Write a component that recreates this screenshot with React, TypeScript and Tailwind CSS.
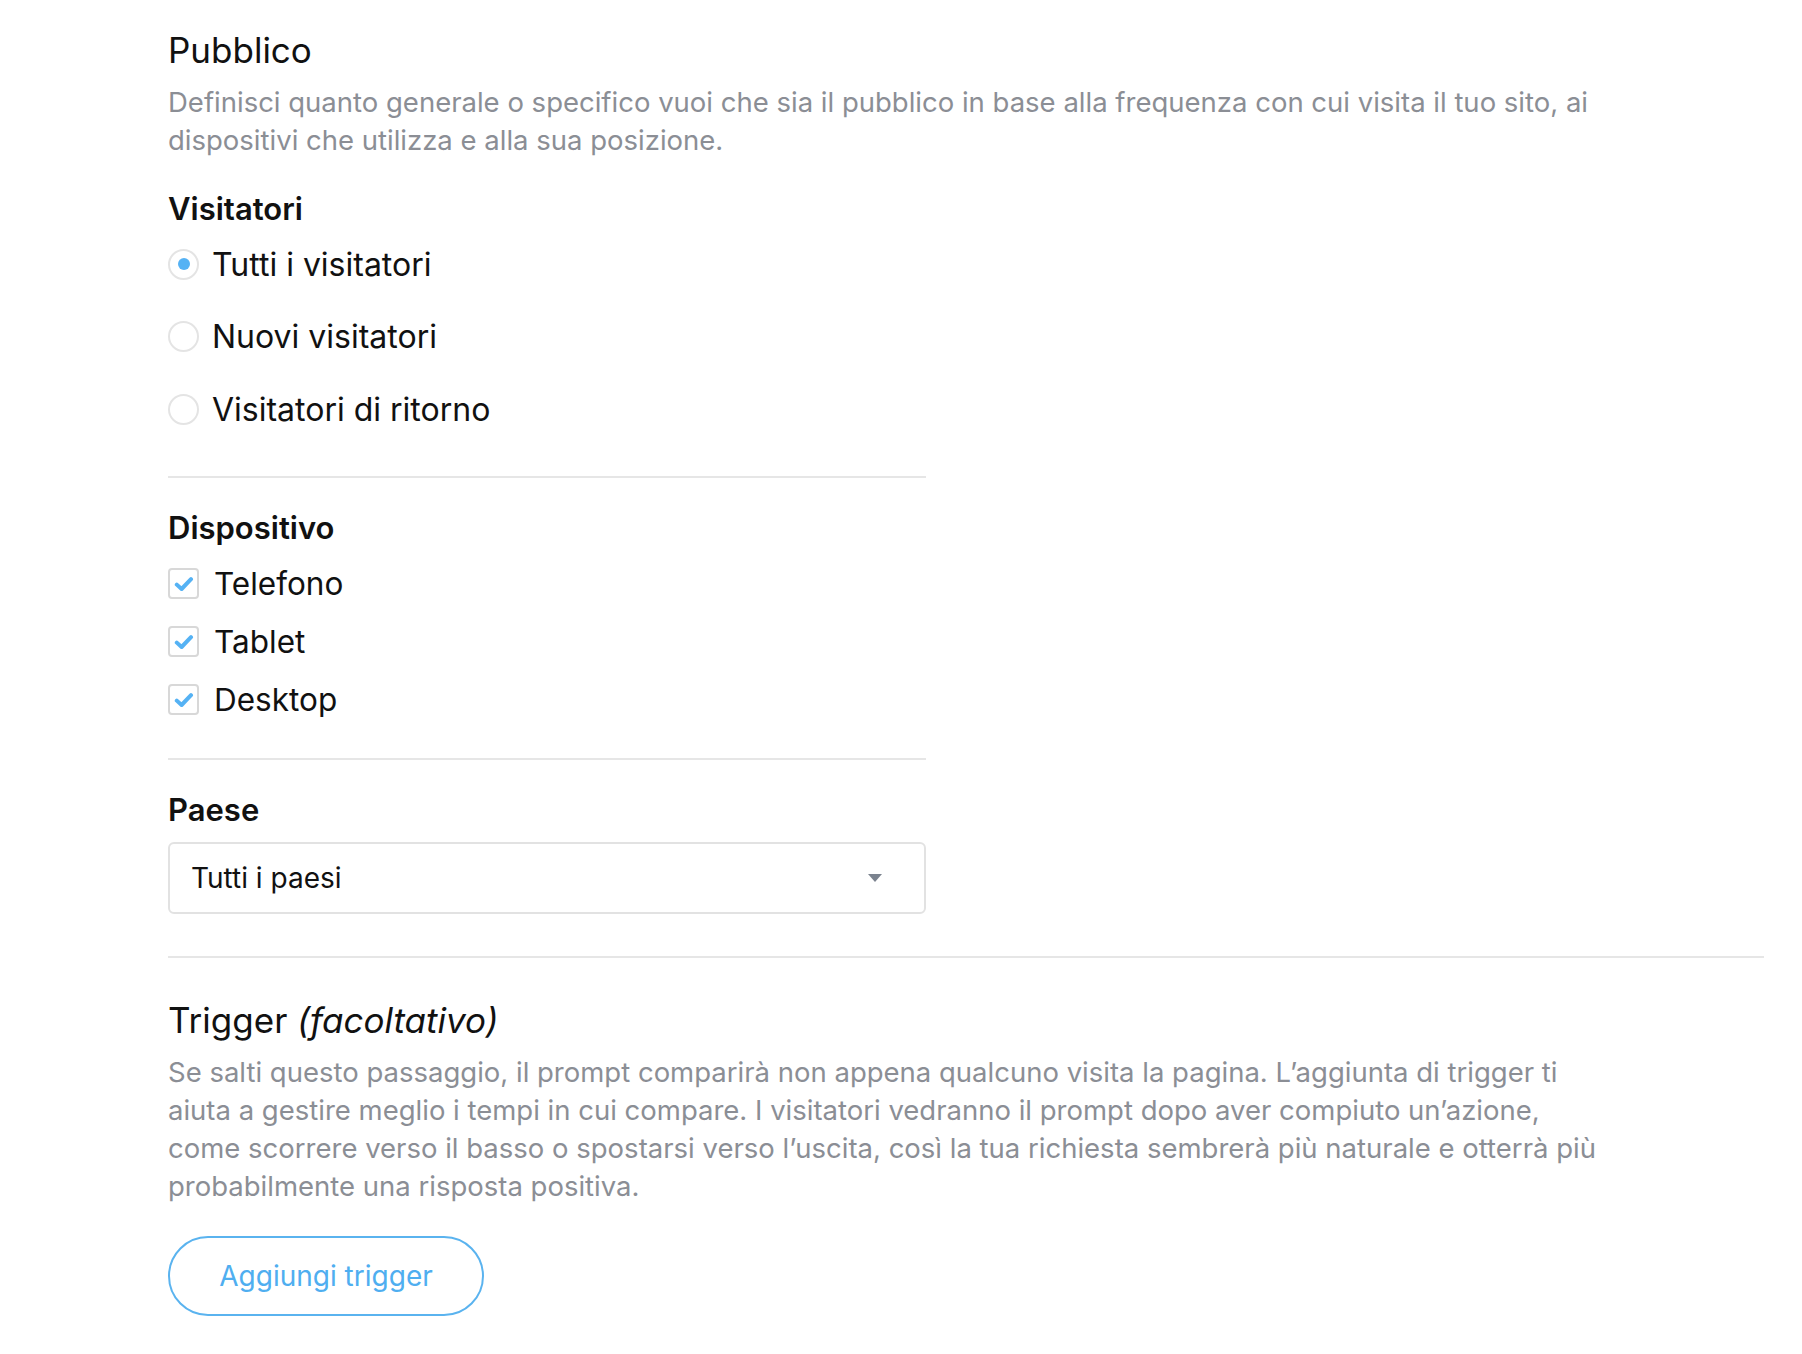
import React from "react";

function Radio({ checked, label }: { checked?: boolean; label: string }) {
  return (
    <div className="flex h-[72.5px] items-center">
      <div className="flex h-[31px] w-[31px] items-center justify-center rounded-full border-2 border-[#e4e4e4] bg-white">
        {checked && <div className="h-[12px] w-[12px] rounded-full bg-[#55b2f4]" />}
      </div>
      <span className="ml-[13px] mt-[1px] text-[32px] leading-none text-[#111]">{label}</span>
    </div>
  );
}

function Check({ label }: { label: string }) {
  return (
    <div className="flex h-[58px] items-center">
      <div className="flex h-[31px] w-[31px] items-center justify-center rounded-[4px] border-2 border-[#d8d8d8] bg-white">
        <svg width="20" height="16" viewBox="0 0 20 16" fill="none">
          <path d="M2.8 8.6 L7.6 13 L17 3.2" stroke="#55b2f4" strokeWidth="4" strokeLinecap="round" strokeLinejoin="round" />
        </svg>
      </div>
      <span className="ml-[15px] text-[31.5px] leading-none text-[#111]">{label}</span>
    </div>
  );
}

export default function App() {
  return (
    <div className="min-h-[1354px] w-full bg-white pl-[168px] pr-[38px] pt-[31px] font-['Inter',_sans-serif]">
      <h1 className="text-[35px] leading-[38px] text-[#111]">Pubblico</h1>
      <p className="mt-[14px] max-w-[1445px] text-[27.5px] leading-[38px] text-[#8b8e95]">
        Definisci quanto generale o specifico vuoi che sia il pubblico in base alla frequenza con cui visita il tuo sito, ai dispositivi che utilizza e alla sua posizione.
      </p>

      <div className="w-[758px]">
        <h2 className="mt-[34px] text-[31px] font-semibold leading-[32px] text-[#111]">Visitatori</h2>
        <div className="mt-[3px]">
          <Radio checked label="Tutti i visitatori" />
          <Radio label="Nuovi visitatori" />
          <Radio label="Visitatori di ritorno" />
        </div>
        <div className="mt-[30px] h-[2px] bg-[#e6e6e6]" />

        <h2 className="mt-[34px] text-[31px] font-semibold leading-[32px] text-[#111]">Dispositivo</h2>
        <div className="mt-[11px]">
          <Check label="Telefono" />
          <Check label="Tablet" />
          <Check label="Desktop" />
        </div>
        <div className="mt-[29px] h-[2px] bg-[#e6e6e6]" />

        <h2 className="mt-[34px] text-[31px] font-semibold leading-[32px] text-[#111]">Paese</h2>
        <div className="mt-[16px] flex h-[72px] items-center justify-between rounded-[6px] border-2 border-[#e2e2e2] pl-[21px] pr-[42px]">
          <span className="text-[28px] leading-none text-[#111]">Tutti i paesi</span>
          <svg width="14" height="8" viewBox="0 0 14 8">
            <path d="M0 0 L14 0 L7 8 Z" fill="#7b838f" />
          </svg>
        </div>
      </div>

      <div className="mt-[42px] h-[2px] bg-[#e6e6e6]" />

      <h1 className="mt-[43px] text-[35px] leading-[38px] text-[#111]">
        Trigger <em className="italic">(facoltativo)</em>
      </h1>
      <p className="mt-[14px] max-w-[1445px] text-[27.5px] leading-[38px] text-[#8b8e95]">
        Se salti questo passaggio, il prompt comparirà non appena qualcuno visita la pagina. L’aggiunta di trigger ti aiuta a gestire meglio i tempi in cui compare. I visitatori vedranno il prompt dopo aver compiuto un’azione, come scorrere verso il basso o spostarsi verso l’uscita, così la tua richiesta sembrerà più naturale e otterrà più probabilmente una risposta positiva.
      </p>
      <button className="mt-[31px] flex h-[80px] w-[316px] items-center justify-center rounded-full border-2 border-[#5ab3ef] text-[28px] text-[#4faef0]">
        Aggiungi trigger
      </button>
    </div>
  );
}
